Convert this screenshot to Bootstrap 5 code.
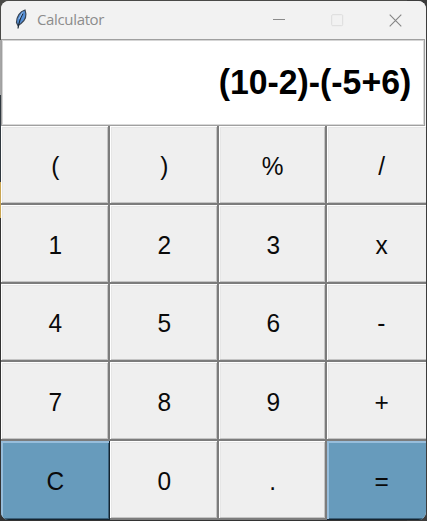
<!DOCTYPE html>
<html lang="en">
<head>
<meta charset="utf-8">
<meta name="viewport" content="width=device-width, initial-scale=1">
<title>Calculator</title>
<link href="https://cdn.jsdelivr.net/npm/bootstrap@5.3.0/dist/css/bootstrap.min.css" rel="stylesheet">
<style>
body { height: 521px; padding: 1px; background: linear-gradient(#3c3c3c, #3c3c3c) right / 20px 100% no-repeat, linear-gradient(#4a4a48 0 40px, #a6a6a6 40px 95px, #30383f 95px 182px, #c9a552 182px 218px, #333 218px); font-family: "Liberation Sans", Arial, sans-serif; }
.calc-window { width: 425px; height: 519px; border-radius: 8px; background: #f2f2f2; }
.title-bar { height: 38px; padding: 0 24px 0 11px; background: #f2f2f2; }
.title-text { font: 15px/20px "Open Sans", "Noto Sans", sans-serif; letter-spacing: -.35px; color: #8c8c8c; margin: 0 0 2px 7px; }
.controls { gap: 45px; }
.readout { height: 87px; width: 424px; background: #fff; border: 1px solid #a0a0a0; box-shadow: inset 1px 1px #d5d5d5, inset -1px -1px #d8d8d8; padding: 0 13px 1px 0; font-size: 35.5px; font-weight: 700; color: #000; line-height: 40px; }
.readout span { transform: scaleX(.952); transform-origin: right; }
.keypad { display: grid; grid-template-columns: 109px 109px 108px 109px; grid-template-rows: 79px 79px 78px 79px 79px; }
.key { border: 0; border-radius: 0; padding: 0; background: #efefef; color: #0a0a0a; font-size: 26px; line-height: 30px; box-shadow: inset -2px -2px #7c7c7c, inset 1px 1px #fff, inset -3px -3px #c4c4c4, inset 2px 2px #e6e6e6; }
.key span { display: inline-block; transform: scaleX(.94); }
.key-accent { background: #679bbc; box-shadow: inset -1px -1px #15242f, inset 2px 2px #97bddb, inset -2px -2px #3c6079; }
</style>
<script src="https://cdn.jsdelivr.net/npm/bootstrap@5.3.0/dist/js/bootstrap.bundle.min.js"></script>
</head>
<body class="m-0 overflow-hidden">
<main class="calc-window overflow-hidden">
  <header class="title-bar d-flex align-items-center justify-content-between">
    <div class="d-flex align-items-center">
      <svg width="18" height="24" viewBox="0 0 18 24" aria-hidden="true">
        <path d="M13 2C8 3.500 4.500 8.500 4.500 14.500l1.500 3 3-2c4-3 6-8 4-13.500z" fill="#5590d8" stroke="#3a4655" stroke-width="1.200"/>
        <path d="M11 5.500C8.500 9.500 7 13.500 6 20.500" fill="none" stroke="#1b2938" stroke-width="1.200"/>
        <path d="M10.500 4.500 7 11" stroke="#9ac0ee" stroke-width="1"/>
      </svg>
      <span class="title-text">Calculator</span>
    </div>
    <div class="controls d-flex align-items-center">
      <svg width="13" height="13" aria-hidden="true"><path d="M0 5.500h12" stroke="#8b8b8b"/></svg>
      <svg width="13" height="13" aria-hidden="true"><rect x=".7" y=".7" width="11" height="11" rx="1" fill="none" stroke="#dcdcdc"/></svg>
      <svg width="13" height="13" aria-hidden="true"><path d="m.7.7 11.600 11.600M12.300.7.7 12.300" stroke="#858585" stroke-width="1.100"/></svg>
    </div>
  </header>
  <div class="readout d-flex align-items-center justify-content-end"><span>(10-2)-(-5+6)</span></div>
  <div class="keypad">
    <button class="key"><span>(</span></button><button class="key"><span>)</span></button><button class="key"><span>%</span></button><button class="key"><span>/</span></button>
    <button class="key"><span>1</span></button><button class="key"><span>2</span></button><button class="key"><span>3</span></button><button class="key"><span>x</span></button>
    <button class="key"><span>4</span></button><button class="key"><span>5</span></button><button class="key"><span>6</span></button><button class="key"><span>-</span></button>
    <button class="key"><span>7</span></button><button class="key"><span>8</span></button><button class="key"><span>9</span></button><button class="key"><span>+</span></button>
    <button class="key key-accent"><span>C</span></button><button class="key"><span>0</span></button><button class="key"><span>.</span></button><button class="key key-accent"><span>=</span></button>
  </div>
</main>
</body>
</html>
